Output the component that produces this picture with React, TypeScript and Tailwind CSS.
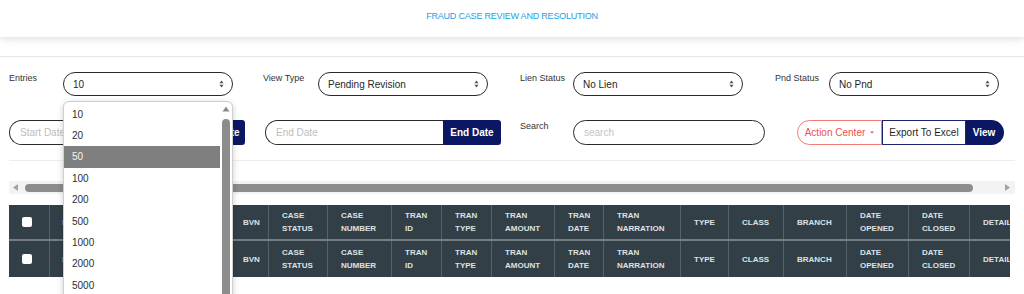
import React from "react";

const filterCols = [
  { label: "Entries", value: "10", w: "w-[254px]", lw: "w-[54px]" },
  { label: "View Type", value: "Pending Revision", w: "w-[257px]", lw: "w-[55px]" },
  { label: "Lien Status", value: "No Lien", w: "w-[255px]", lw: "w-[53px]" },
  { label: "Pnd Status", value: "No Pnd", w: "w-[230px]", lw: "w-[54px]" },
];

// first columns sit under the open dropdown, only the edge of "S/N" peeks out
const columns = [
  { t: "S/N", w: "w-[182px]", pl: "pl-[12px]" },
  { t: "BVN", w: "w-[37px]", pl: "pl-[11px]" },
  { t: "CASE STATUS", w: "w-[59px]" },
  { t: "CASE NUMBER", w: "w-[64px]" },
  { t: "TRAN ID", w: "w-[50px]" },
  { t: "TRAN TYPE", w: "w-[50px]" },
  { t: "TRAN AMOUNT", w: "w-[63px]" },
  { t: "TRAN DATE", w: "w-[49px]" },
  { t: "TRAN NARRATION", w: "w-[77px]" },
  { t: "TYPE", w: "w-[48px]" },
  { t: "CLASS", w: "w-[55px]" },
  { t: "BRANCH", w: "w-[63px]" },
  { t: "DATE OPENED", w: "w-[62px]" },
  { t: "DATE CLOSED", w: "w-[61px]" },
  { t: "DETAILS", w: "w-[70px]" },
];

const entries = ["10", "20", "50", "100", "200", "500", "1000", "2000", "5000"];

function SortArrows() {
  return (
    <svg width="5" height="8" viewBox="0 0 5 8" className="shrink-0">
      <path d="M2.5 0.5 L4.6 3.3 L0.4 3.3 Z" fill="#555" />
      <path d="M2.5 7.5 L4.6 4.7 L0.4 4.7 Z" fill="#555" />
    </svg>
  );
}

function FakeSelect({ value }: { value: string }) {
  return (
    <div className="h-[24px] w-[170px] rounded-full border border-[#2a2a2a] pl-[9px] pr-[8px] flex items-center justify-between text-[10px] text-[#262626]">
      <span>{value}</span>
      <SortArrows />
    </div>
  );
}

function DateGroup({ label }: { label: string }) {
  return (
    <div className="flex h-[25px]">
      <div className="w-[178px] h-full rounded-l-full border border-r-0 border-[#2a2a2a] pl-[10px] flex items-center text-[10px] text-[#bdbdbd]">
        {label}
      </div>
      <button className="w-[58px] h-full rounded-r-[3px] bg-[#0b1763] text-white text-[10px] font-bold">
        {label}
      </button>
    </div>
  );
}

function HeaderRow({ last }: { last?: boolean }) {
  return (
    <div className={`flex h-[36px] ${last ? "" : "border-b-2 border-[#737d82]"}`}>
      <div className="w-[41px] shrink-0 flex items-center pl-[13px] border-r border-[#56626a]">
        <div className="w-[10px] h-[10px] rounded-[2px] bg-white" />
      </div>
      {columns.map((c) => (
        <div
          key={c.t}
          className={`${c.w} shrink-0 ${c.pl ?? "pl-[13px]"} flex flex-col justify-center border-r border-[#56626a] text-[8px] leading-[13px] font-bold text-[#dde2e4] whitespace-nowrap overflow-hidden`}
        >
          {c.t.split(" ").map((w) => (
            <span key={w}>{w}</span>
          ))}
        </div>
      ))}
    </div>
  );
}

export default function App() {
  return (
    <div className="relative h-[294px] w-[1024px] overflow-hidden bg-white font-['Liberation_Sans',Arial,sans-serif]">
      {/* title card */}
      <div className="relative z-10 h-[37px] bg-white shadow-[0_1px_9px_rgba(0,0,0,0.16)] flex justify-center pt-[10px]">
        <span className="text-[9px] tracking-[-0.2px] text-[#1aa2e4]">FRAUD CASE REVIEW AND RESOLUTION</span>
      </div>
      <div className="h-[20px] border-b border-[#e6e6e6]" />

      <div className="px-[9px]">
        {/* filters row */}
        <div className="flex mt-[15px]">
          {filterCols.map((f) => (
            <div key={f.label} className={`${f.w} flex items-start`}>
              <span className={`${f.lw} text-[9px] leading-[11px] text-[#333] pt-[1px]`}>{f.label}</span>
              <FakeSelect value={f.value} />
            </div>
          ))}
        </div>

        {/* dates / search / actions */}
        <div className="flex items-start mt-[24px]">
          <DateGroup label="Start Date" />
          <div className="ml-[20px]">
            <DateGroup label="End Date" />
          </div>
          <span className="ml-[19px] w-[53px] text-[9px] leading-[11px] text-[#333] pt-[1px]">Search</span>
          <div className="w-[192px] h-[25px] rounded-full border border-[#2a2a2a] pl-[10px] flex items-center text-[10px] text-[#c4c4c4]">
            search
          </div>
          <div className="ml-[32px] flex h-[25px] text-[10px]">
            <div className="w-[85px] rounded-l-full border border-[#f27a7a] text-[#ee4f4f] flex items-center justify-center gap-[5px]">
              <span>Action Center</span>
              <svg width="4" height="3" viewBox="0 0 4 3">
                <path d="M0 0.5 H4 L2 2.5 Z" fill="#ee4f4f" />
              </svg>
            </div>
            <div className="w-[84px] border border-[#1c2470] text-[#1f1f1f] flex items-center justify-center">
              Export To Excel
            </div>
            <div className="w-[38px] rounded-r-full bg-[#0b1763] text-white font-bold flex items-center justify-center pr-[2px]">
              View
            </div>
          </div>
        </div>

        <div className="mt-[15px] border-t border-[#ececec]" />

        {/* horizontal scrollbar */}
        <div className="mt-[20px] h-[13px] bg-[#f3f3f3] flex items-center pl-[4px] pr-[5px]">
          <svg width="5" height="7" viewBox="0 0 5 7">
            <path d="M0 3.5 L5 0 V7 Z" fill="#a3a3a3" />
          </svg>
          <div className="ml-[7px] w-[948px] h-[8px] rounded-full bg-[#8d8d8d]" />
          <div className="flex-1" />
          <svg width="5" height="7" viewBox="0 0 5 7">
            <path d="M5 3.5 L0 0 V7 Z" fill="#a3a3a3" />
          </svg>
        </div>

        {/* table */}
        <div className="mt-[11px] w-[1001px] overflow-hidden bg-[#333f46]">
          <div className="w-max">
            <HeaderRow />
            <HeaderRow last />
          </div>
        </div>
      </div>

      {/* open entries dropdown */}
      <div className="absolute left-[63px] top-[101px] w-[170px] h-[205px] bg-white border border-[#cfcfcf] rounded-t-[6px] shadow-[0_2px_6px_rgba(0,0,0,0.2)] z-20">
        <div className="pt-[1.5px] w-[156px]">
          {entries.map((e) => (
            <div
              key={e}
              className={`h-[21.4px] pl-[8px] flex items-center text-[10px] ${e === "50" ? "bg-[#7f7f7f] text-[#f4f4f4]" : "text-[#2e2e2e]"}`}
            >
              {e}
            </div>
          ))}
        </div>
        <div className="absolute right-[2px] top-[4px] w-[9px] flex flex-col items-center">
          <svg width="8" height="6" viewBox="0 0 8 6">
            <path d="M4 0.5 L7.5 5.5 H0.5 Z" fill="#8a8a8a" />
          </svg>
          <div className="mt-[7px] w-[8px] h-[200px] rounded-t-full bg-[#8c8c8c]" />
        </div>
      </div>
    </div>
  );
}
